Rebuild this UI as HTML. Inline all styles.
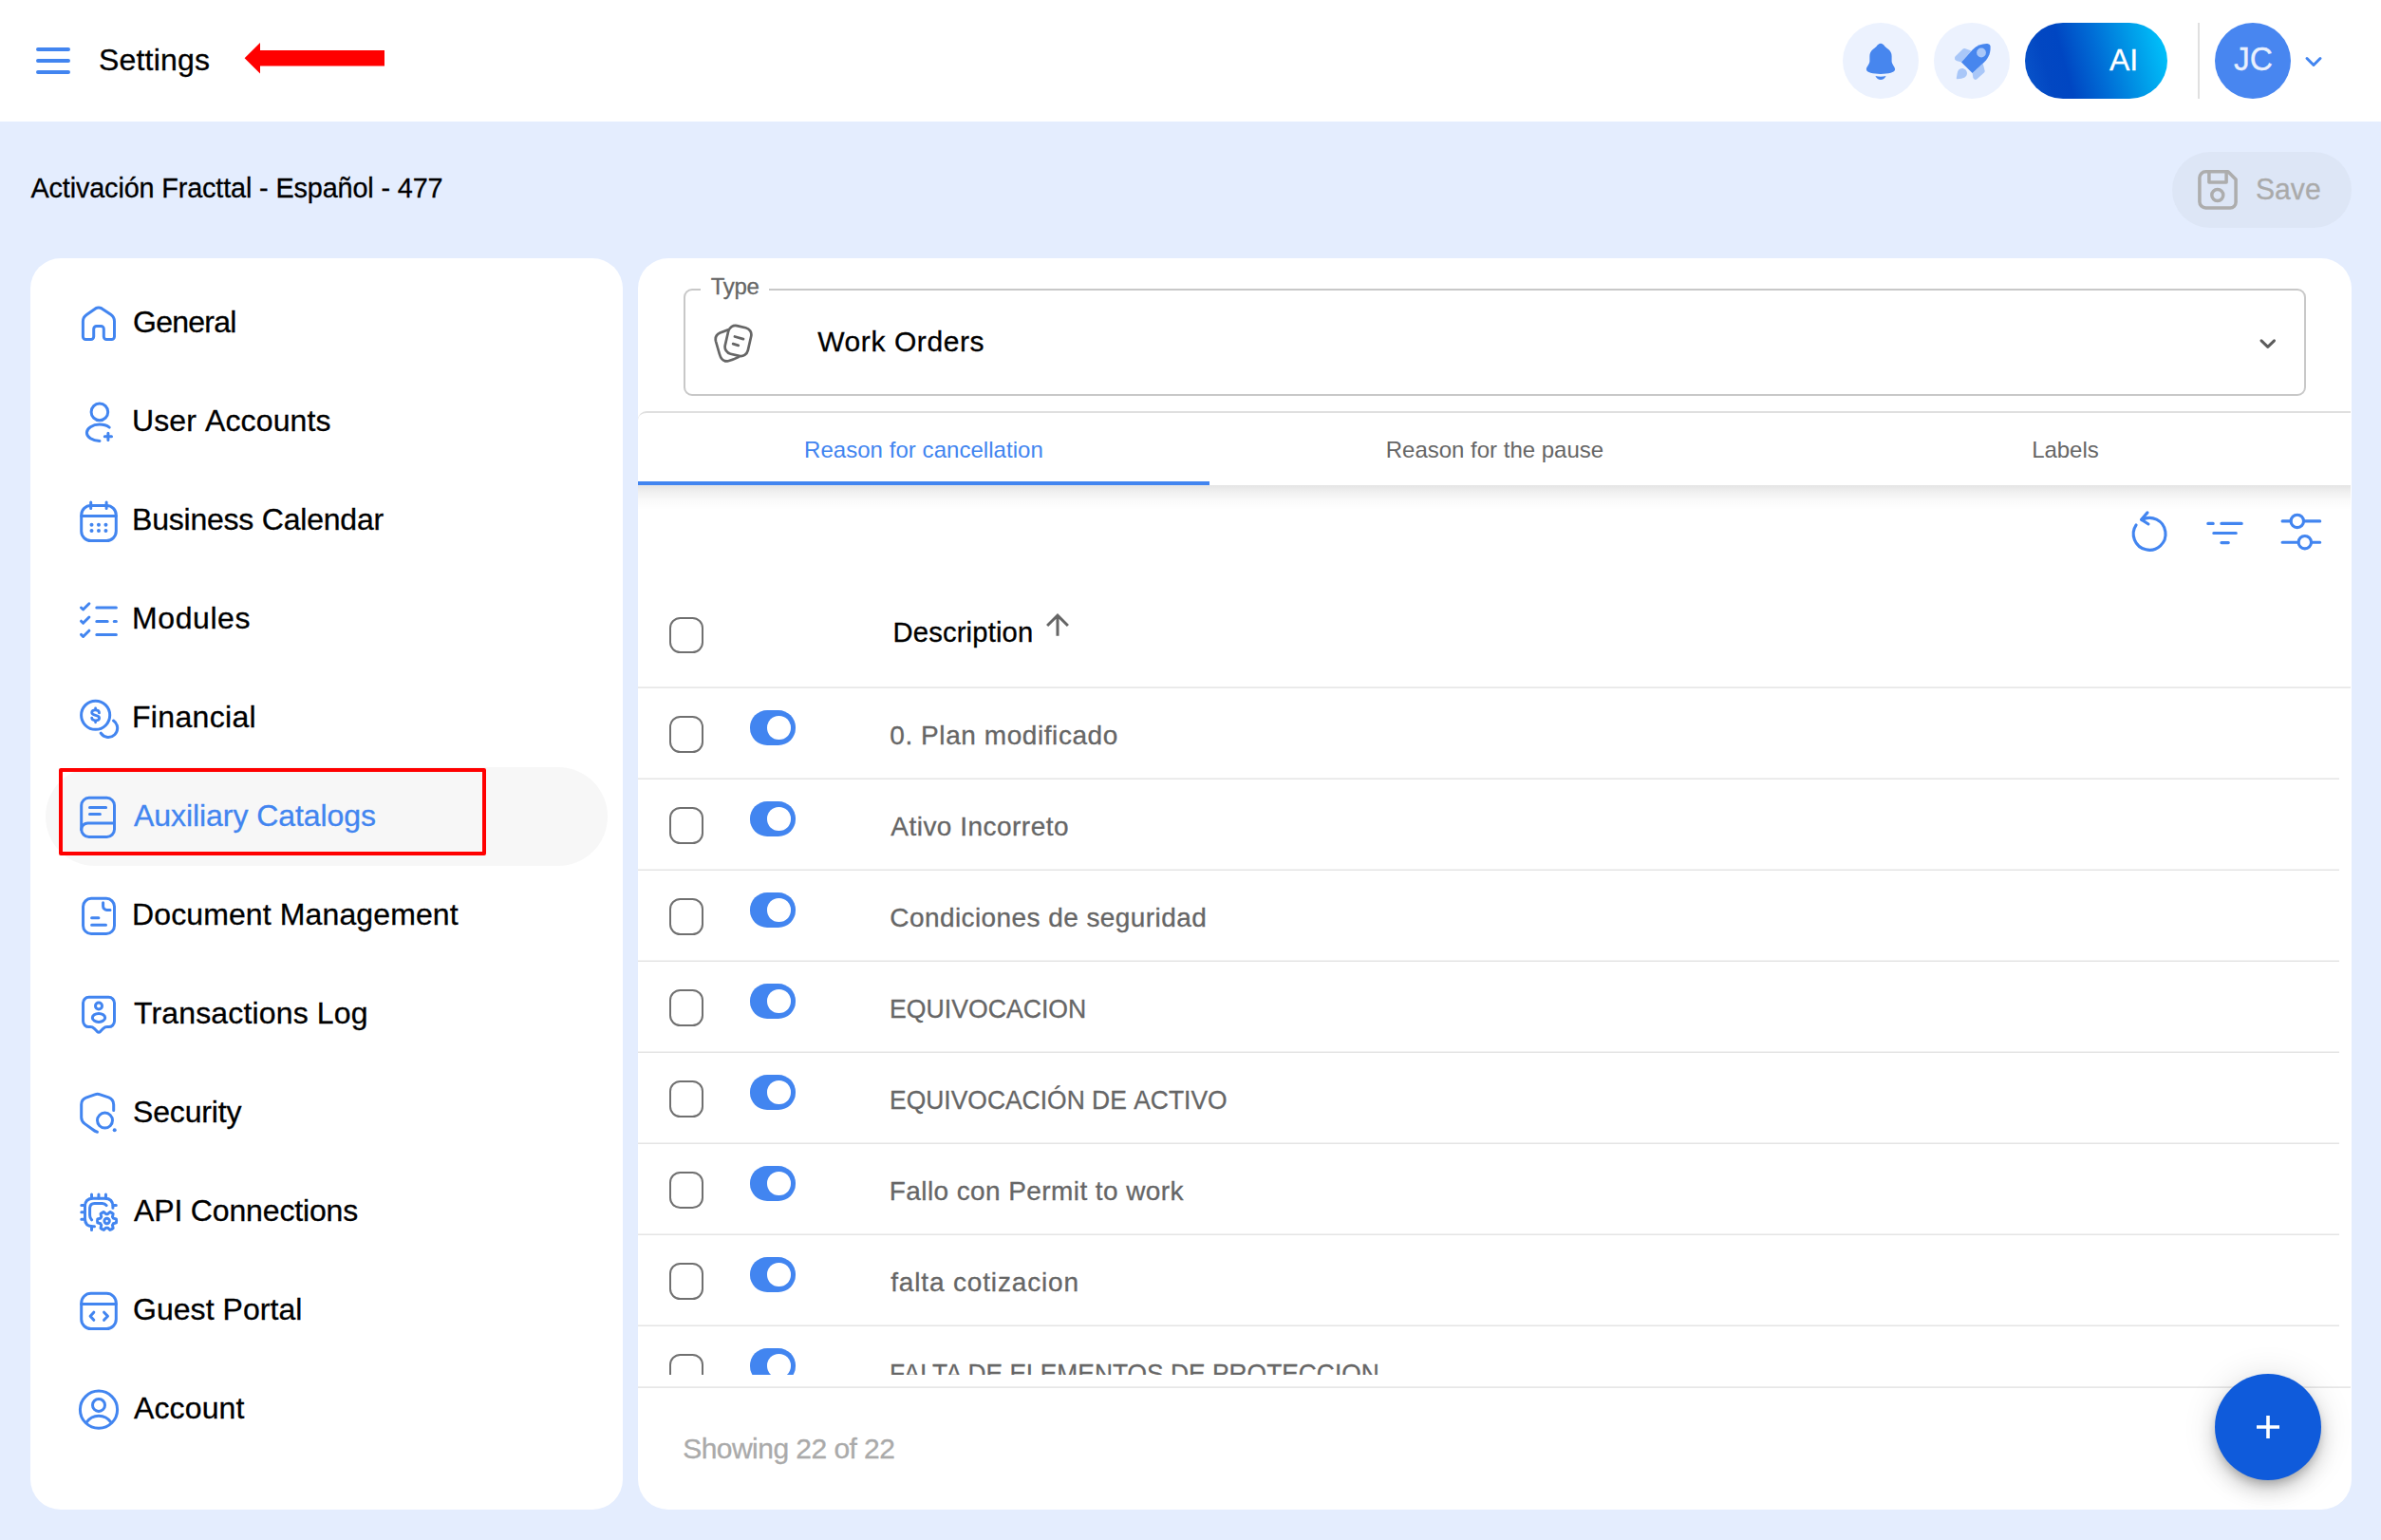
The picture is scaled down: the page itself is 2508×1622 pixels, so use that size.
<!DOCTYPE html><html lang="en"><head><meta charset="utf-8"><title>Settings - Auxiliary Catalogs</title>
<style>
*{box-sizing:border-box;margin:0;padding:0}
html,body{width:2508px;height:1622px;overflow:hidden}
body{position:relative;background:#e4edfe;font-family:"Liberation Sans", Arial, sans-serif;-webkit-font-smoothing:antialiased}
.abs,.t,.ic{position:absolute}
.t{display:block;line-height:1;white-space:nowrap;font-weight:400;-webkit-text-stroke:0.3px currentColor}
h1.t{font-weight:400}
.ic{display:block;overflow:visible}
#top{position:absolute;left:0;top:0;width:2508px;height:128px;background:#fff}
.round{position:absolute;width:80px;height:80px;border-radius:50%}
#nav{position:absolute;left:32px;top:272px;width:624px;height:1318px;background:#fff;border-radius:32px}
#main{position:absolute;left:672px;top:272px;width:1804.5px;height:1318px;background:#fff;border-radius:32px;overflow:hidden}
.cb{position:absolute;width:36.2px;height:38.4px;border:2px solid #707070;border-radius:11.5px;background:#fff}
.tg{position:absolute;width:48.3px;height:36.2px;border-radius:18.1px;background:#4285f0}
.tg i{position:absolute;left:17.8px;top:5.9px;width:24.6px;height:24.5px;border-radius:50%;background:#fff}
.ln{position:absolute;left:0;height:2px;background:linear-gradient(180deg,#f2f2f2 50%,#e4e4e4 50%)}
.ln.h{background:linear-gradient(180deg,#eeeeee 50%,#e7e7e7 50%)}
</style></head><body>
<header id="top">
<svg class="ic" style="left:38px;top:50px" width="36" height="28" viewBox="0 0 36 28" fill="none" stroke="#4285f0" stroke-width="4" stroke-linecap="round" stroke-linejoin="round" ><path d="M2 2H34M2 14H34M2 26H34"/></svg>
<span class="t" style="left:104px;top:47px;font-size:32px;letter-spacing:0.196px;color:#000;">Settings</span>
<svg class="ic" style="left:250px;top:40px" width="170" height="44" viewBox="250 40 170 44"><polygon fill="#ff0000" points="257.6,61.3 274,45.1 274,53 405,53 405,69.5 274,69.5 274,77.6"/></svg>
<div class="round" style="left:1941px;top:24px;background:#ecf2fe"><svg class="ic" style="left:0;top:0" width="80" height="80" viewBox="-40 -40 80 80"><path fill="#4786ee" d="M0-18.2C-1.8-18.2-3.2-16.8-4.3-15.3C-5.5-14-7-13-8.2-12.1C-10.5-10.2-11.6-8-11.6-5L-11.6 0.5C-11.6 3.5-15.1 6.5-15.1 9C-15.1 12.4-8 13.9 0 13.9C8 13.9 15.1 12.4 15.1 9C15.1 6.5 11.6 3.5 11.6 0.5L11.6-5C11.6-8 10.5-10.2 8.2-12.1C7-13 5.5-14 4.3-15.3C3.2-16.8 1.8-18.2 0-18.2Z"/><path fill="#4786ee" d="M-5.6 15.9Q0 17.5 5.6 15.9Q3.6 20 0 20Q-3.6 20-5.6 15.9Z"/></svg></div>
<div class="round" style="left:2037px;top:24px;background:#ecf2fe"><svg class="ic" style="left:0;top:0" width="80" height="80" viewBox="-40 -40 80 80"><g fill="#a9c7f8"><path d="M-9.6-12.3Q-8.6-13.2-7.4-12.9L-0.6-10.5L-11 1.5L-16.2 0Q-18.6-0.9-18-3.2Q-17.8-4.2-17-5Z"/><path d="M11.7 3.1L13.6 10.2Q13.9 11.5 13 12.4L5.4 19.3Q4 20.3 2.6 19.6Q1.6 19 1.3 17.6L0.6 13Z"/><path d="M-10.4 7.9C-7.2 7.9-5 10.3-5 13.1C-5 16.2-7.4 18.3-10.8 18.7L-15.2 19.3Q-16.4 19.4-16.2 18.2L-15.4 13.4C-14.9 10.3-13.2 7.9-10.4 7.9Z"/></g><path fill="#4786ee" d="M-11 1.5L0.6 13L12.8 1.8C18.6-3.9 20-10 19.5-15.6Q19.3-17.6 17.2-17.8C11.4-18.3 5.6-16.4 0.6-11.5Z"/><circle cx="10" cy="-8.5" r="4.9" fill="#a9c7f8"/></svg></div>
<div class="abs" style="left:2133px;top:24px;width:150px;height:80px;border-radius:40px;background:linear-gradient(75deg,#0a56cb 0%,#0247c2 18%,#0046c2 30%,#006dd6 52%,#009be8 75%,#00caff 100%)"></div>
<span class="t" style="left:2222px;top:47px;font-size:32px;letter-spacing:-0.044px;color:#fff;">AI</span>
<div class="abs" style="left:2315px;top:24px;width:2px;height:80px;background:#e0e0e0"></div>
<div class="round" style="left:2333px;top:24px;background:#4886f0"></div>
<span class="t" style="left:2353.1px;top:44.4px;font-size:35px;letter-spacing:0px;color:#e9f0fd;transform:scaleX(0.959);transform-origin:0 50%;">JC</span>
<svg class="ic" style="left:2426px;top:56px" width="22" height="18" viewBox="0 0 22 18" fill="none" stroke="#4285f0" stroke-width="3" stroke-linecap="round" stroke-linejoin="round" ><path d="M4 5.5L11 12.5L18 5.5"/></svg>
</header>
<h1 class="t" style="left:32.5px;top:184px;font-size:28.8px;letter-spacing:-0.133px;color:#000;">Activación Fracttal - Español - 477</h1>
<div class="abs" style="left:2288px;top:160px;width:189px;height:80px;border-radius:40px;background:#dde6f6"></div>
<svg class="ic" style="left:2315px;top:179px" width="42" height="42" viewBox="0 0 42 42" fill="none" stroke="#adadad" stroke-width="3.5" stroke-linecap="butt" stroke-linejoin="round" ><path d="M8.4 1.75H31.9L40.1 10V34a6 6 0 0 1 -6 6H8.4a6.5 6.5 0 0 1 -6.5 -6.5V8.25a6.5 6.5 0 0 1 6.5 -6.5Z"/><path d="M11.9 1.75V12.9H30.1V1.75"/><circle cx="20.8" cy="26.6" r="6"/></svg>
<span class="t" style="left:2376.06px;top:183px;font-size:32px;letter-spacing:0px;color:#aaaaaa;transform:scaleX(0.9418);transform-origin:0 50%;">Save</span>
<nav id="nav">
<div class="abs" style="left:16px;top:536px;width:592px;height:104px;border-radius:52px;background:#f7f7f7"></div>
<a class="abs" style="left:0;top:16px;width:624px;height:104px">
<svg class="ic" style="left:48px;top:28px" width="48" height="48" viewBox="0 0 48 48" fill="none" stroke="#4285f0" stroke-width="3" stroke-linecap="round" stroke-linejoin="round" ><path d="M18.7 38.6V30.4a3 3 0 0 1 3-3h4.6a3 3 0 0 1 3 3v8.2a3 3 0 0 0 3 3h5.2a3 3 0 0 0 3-3V22.5Q40.5 17.8 36.7 15.2L27.2 8.9Q23.85 6.9 20.6 8.9L11.2 15.4Q7.4 18 7.4 22.5V38.6a3 3 0 0 0 3 3h5.3a3 3 0 0 0 3-3Z"/></svg>
<span class="t" style="left:108.0px;top:34.7px;font-size:32px;letter-spacing:-0.739px;color:#000;">General</span>
</a>
<a class="abs" style="left:0;top:120px;width:624px;height:104px">
<svg class="ic" style="left:48px;top:28px" width="48" height="48" viewBox="0 0 48 48" fill="none" stroke="#4285f0" stroke-width="3" stroke-linecap="round" stroke-linejoin="round" ><circle cx="24.9" cy="13.9" r="8.8"/><path d="M35.2 30.1C32.6 28.2 28.9 27.1 24.8 27.1C17.4 27.1 11.4 31 11.4 35.8C11.4 40.4 17.2 44.1 25 44.4"/><path d="M30.3 39.8h7.2M33.9 36.2v7.2"/></svg>
<span class="t" style="left:107.0px;top:34.7px;font-size:32px;letter-spacing:0.118px;color:#000;font-kerning:none;">User Accounts</span>
</a>
<a class="abs" style="left:0;top:224px;width:624px;height:104px">
<svg class="ic" style="left:48px;top:28px" width="48" height="48" viewBox="0 0 48 48" fill="none" stroke="#4285f0" stroke-width="3" stroke-linecap="round" stroke-linejoin="round" ><rect x="5.7" y="8.4" width="36.6" height="37.1" rx="10"/><path d="M5.7 19.4H42.3M15.7 5.1v6.3M32.1 5.1v6.3"/><circle cx="16.5" cy="28.7" r="2" fill="#4285f0" stroke="none"/><circle cx="23.95" cy="28.7" r="2" fill="#4285f0" stroke="none"/><circle cx="31.45" cy="28.7" r="2" fill="#4285f0" stroke="none"/><circle cx="16.5" cy="35.1" r="2" fill="#4285f0" stroke="none"/><circle cx="23.95" cy="35.1" r="2" fill="#4285f0" stroke="none"/><circle cx="31.45" cy="35.1" r="2" fill="#4285f0" stroke="none"/></svg>
<span class="t" style="left:107.0px;top:34.7px;font-size:32px;letter-spacing:-0.215px;color:#000;">Business Calendar</span>
</a>
<a class="abs" style="left:0;top:328px;width:624px;height:104px">
<svg class="ic" style="left:48px;top:28px" width="48" height="48" viewBox="0 0 48 48" fill="none" stroke="#4285f0" stroke-width="3" stroke-linecap="round" stroke-linejoin="round" ><path d="M5.5 12l2.1 2L13.9 7.8M5.5 26.2l2.1 2.1L13.9 22M5.5 40.4l2.1 2.1L13.9 36.2"/><path d="M21.8 12H42.4M21.8 26.4H33.2M40.2 26.4H42.4M21.8 40.55H42.4"/></svg>
<span class="t" style="left:107.0px;top:34.7px;font-size:32px;letter-spacing:0.591px;color:#000;">Modules</span>
</a>
<a class="abs" style="left:0;top:432px;width:624px;height:104px">
<svg class="ic" style="left:48px;top:28px" width="48" height="48" viewBox="0 0 48 48" fill="none" stroke="#4285f0" stroke-width="3" stroke-linecap="round" stroke-linejoin="round" ><circle cx="20.65" cy="21.3" r="15.05"/><path d="M39.55 27.05A9.54 9.54 0 1 1 26.2 40.2"/><path d="M24.5 18.9C24.5 17 23 15.9 20.6 15.9C18.2 15.9 16.7 17 16.7 18.6C16.7 20.3 18.2 20.9 20.6 21.4C23 21.9 24.6 22.6 24.6 24.2C24.6 25.7 23 26.8 20.6 26.8C18.2 26.8 16.7 25.7 16.7 24.1M20.6 14v1.9M20.6 26.8v2" stroke-width="2.8"/></svg>
<span class="t" style="left:107.0px;top:34.7px;font-size:32px;letter-spacing:0.318px;color:#000;">Financial</span>
</a>
<a class="abs" style="left:0;top:536px;width:624px;height:104px">
<svg class="ic" style="left:48px;top:28px" width="48" height="48" viewBox="0 0 48 48" fill="none" stroke="#4285f0" stroke-width="3" stroke-linecap="round" stroke-linejoin="round" ><rect x="5.7" y="4.35" width="34.8" height="41.15" rx="8"/><path d="M14.5 14.55H31.6M14.5 21.6H25.4M40.5 30.9H12.5a6.8 6.8 0 0 0 -6.8 6.8"/></svg>
<span class="t" style="left:109.0px;top:34.7px;font-size:32px;letter-spacing:-0.065px;color:#4285f0;">Auxiliary Catalogs</span>
</a>
<a class="abs" style="left:0;top:640px;width:624px;height:104px">
<svg class="ic" style="left:48px;top:28px" width="48" height="48" viewBox="0 0 48 48" fill="none" stroke="#4285f0" stroke-width="3" stroke-linecap="round" stroke-linejoin="round" ><rect x="7.55" y="6.35" width="32.95" height="37.15" rx="8.5"/><path d="M28.6 10.7V14.4a4 4 0 0 0 4 4H36M16.6 26.65H23.9M16.6 34.15H31.5"/></svg>
<span class="t" style="left:107.0px;top:34.7px;font-size:32px;letter-spacing:0.118px;color:#000;">Document Management</span>
</a>
<a class="abs" style="left:0;top:744px;width:624px;height:104px">
<svg class="ic" style="left:48px;top:28px" width="48" height="48" viewBox="0 0 48 48" fill="none" stroke="#4285f0" stroke-width="3" stroke-linecap="round" stroke-linejoin="round" ><path d="M13.55 6.35H34.5a6 6 0 0 1 6 6V31.6a6 6 0 0 1 -6 6H33q-2.5 0 -4.3 1.7L25.8 42.3q-1.8 1.6 -3.6 0L19.3 39.3q-1.8 -1.7 -4.3 -1.7H13.55a6 6 0 0 1 -6 -6V12.35a6 6 0 0 1 6 -6Z"/><circle cx="24" cy="15.5" r="3.5"/><ellipse cx="24" cy="27.9" rx="6.7" ry="4.5"/></svg>
<span class="t" style="left:109.0px;top:34.7px;font-size:32px;letter-spacing:0.151px;color:#000;">Transactions Log</span>
</a>
<a class="abs" style="left:0;top:848px;width:624px;height:104px">
<svg class="ic" style="left:48px;top:28px" width="48" height="48" viewBox="0 0 48 48" fill="none" stroke="#4285f0" stroke-width="3" stroke-linecap="round" stroke-linejoin="round" ><path d="M39.7 21.6V15.5Q39.7 10 34.5 7.9L25.5 4.8Q22.7 3.8 19.9 4.8L10.6 8.2Q5.7 10.2 5.7 15.2V29Q5.7 33 9.3 35.6L17.5 41.5Q20 43.6 22.5 44.2"/><circle cx="30.5" cy="32.1" r="8"/><circle cx="40.7" cy="42.2" r="2" fill="#4285f0" stroke="none"/></svg>
<span class="t" style="left:108.0px;top:34.7px;font-size:32px;letter-spacing:-0.156px;color:#000;">Security</span>
</a>
<a class="abs" style="left:0;top:952px;width:624px;height:104px">
<svg class="ic" style="left:48px;top:28px" width="48" height="48" viewBox="0 0 48 48" fill="none" stroke="#4285f0" stroke-width="3" stroke-linecap="round" stroke-linejoin="round" ><path d="M38.9 20.3V18.5Q38.9 10.15 30.5 10.15H18Q9.5 10.15 9.5 18.5V31.5Q9.5 39.7 17.5 39.7H19.5"/><path d="M32.1 17.6Q30.5 15.5 27.9 15.5H19.5Q14.6 15.5 14.6 21V28Q14.6 31 16.6 32.8"/><path d="M16.5 5.9v4.2M23.95 5.9v4.2M31.45 5.9v4.2M5.8 17.4h3.7M5.8 24.85h3.7M5.8 32.3h3.7M39.2 17.4h3.1M16.5 39.7v3.8"/><path d="M42.42 32.04A10.0 10.0 0 0 1 42.42 35.86L39.32 36.80A7.3 7.3 0 0 1 38.43 38.34L39.16 41.50A10.0 10.0 0 0 1 35.86 43.41L33.49 41.20A7.3 7.3 0 0 1 31.71 41.20L29.34 43.41A10.0 10.0 0 0 1 26.04 41.50L26.77 38.34A7.3 7.3 0 0 1 25.88 36.80L22.78 35.86A10.0 10.0 0 0 1 22.78 32.04L25.88 31.10A7.3 7.3 0 0 1 26.77 29.56L26.04 26.40A10.0 10.0 0 0 1 29.34 24.49L31.71 26.70A7.3 7.3 0 0 1 33.49 26.70L35.86 24.49A10.0 10.0 0 0 1 39.16 26.40L38.43 29.56A7.3 7.3 0 0 1 39.32 31.10Z"/><circle cx="32.6" cy="33.95" r="2.7"/></svg>
<span class="t" style="left:109.0px;top:34.7px;font-size:32px;letter-spacing:-0.151px;color:#000;">API Connections</span>
</a>
<a class="abs" style="left:0;top:1056px;width:624px;height:104px">
<svg class="ic" style="left:48px;top:28px" width="48" height="48" viewBox="0 0 48 48" fill="none" stroke="#4285f0" stroke-width="3" stroke-linecap="round" stroke-linejoin="round" ><rect x="5.7" y="6.35" width="36.6" height="37.15" rx="10"/><path d="M5.7 17.4H42.3M18.8 26.2L15.1 30.25L18.8 34.3M29.6 26.2L33.5 30.25L29.6 34.3"/></svg>
<span class="t" style="left:108.0px;top:34.7px;font-size:32px;letter-spacing:0.045px;color:#000;">Guest Portal</span>
</a>
<a class="abs" style="left:0;top:1160px;width:624px;height:104px">
<svg class="ic" style="left:48px;top:28px" width="48" height="48" viewBox="0 0 48 48" fill="none" stroke="#4285f0" stroke-width="3" stroke-linecap="round" stroke-linejoin="round" ><circle cx="24" cy="24.7" r="19.6"/><circle cx="24" cy="19.95" r="6.5"/><path d="M10.8 38.4C14 33.9 18.8 31.3 24 31.3C29.2 31.3 34 33.9 37.2 38.4"/></svg>
<span class="t" style="left:109.0px;top:34.7px;font-size:32px;letter-spacing:0.128px;color:#000;">Account</span>
</a>
<div class="abs" style="left:30px;top:537px;width:450px;height:92px;border:4px solid #ff0000;border-radius:2px"></div>
</nav>
<main id="main">
<div class="abs" style="left:48px;top:32px;width:1709px;height:113px;border:2px solid #c8c8c8;border-radius:9px"></div>
<div class="abs" style="left:66px;top:30px;width:72px;height:6px;background:#fff"></div>
<span class="t" style="left:76.75px;top:17.75px;font-size:24px;letter-spacing:-0.311px;color:#666;">Type</span>
<svg class="ic" style="left:78px;top:66px" width="46" height="46" viewBox="750 338 46 46" fill="none" stroke="#666" stroke-width="2.7" stroke-linecap="round" stroke-linejoin="round"><path d="M766.4 347.5L758.5 350.6Q752.6 353.3 754 359.5L757.9 373Q760.3 381.6 767 380.2Q772 379 777.8 376.1"/><rect x="-12.3" y="-15.2" width="24.6" height="30.4" rx="7.6" transform="translate(777.5 358.95) rotate(13)"/><path d="M773.9 354.5L783 357.1M772.1 362.1L777.8 363.9"/></svg>
<span class="t" style="left:189.25px;top:72.5px;font-size:30px;letter-spacing:0.578px;color:#000;">Work Orders</span>
<svg class="ic" style="left:1704px;top:80px" width="26" height="22" viewBox="2376 352 26 22" fill="none" stroke="#5c5c5c" stroke-width="3" stroke-linecap="round" stroke-linejoin="round"><path d="M2382 358.9L2388.75 365.3L2395.5 358.9"/></svg>
<div class="abs" style="left:0;top:238.5px;width:1804px;height:26px;background:linear-gradient(180deg,rgba(0,0,0,.105) 0%,rgba(0,0,0,.055) 30%,rgba(0,0,0,.018) 65%,rgba(0,0,0,0) 100%)"></div>
<div class="abs" style="left:0;top:161px;width:1804px;height:77.5px;background:#fff;border-top:2px solid #dfdfdf;border-top-left-radius:9px"></div>
<div class="abs" style="left:0;top:235px;width:601.5px;height:3.6px;background:#4285f0"></div>
<span class="t" style="left:175px;top:190px;font-size:24px;letter-spacing:0.047px;color:#4285f0;-webkit-text-stroke:0;">Reason for cancellation</span>
<span class="t" style="left:787.75px;top:189.75px;font-size:24px;letter-spacing:-0.007px;color:#666;-webkit-text-stroke:0;">Reason for the pause</span>
<span class="t" style="left:1468.2px;top:189.75px;font-size:24px;letter-spacing:-0.045px;color:#666;-webkit-text-stroke:0;">Labels</span>
<svg class="ic" style="left:1564px;top:260px" width="220" height="56" viewBox="2236 532 220 56" fill="none" stroke="#4285f0" stroke-width="3.1" stroke-linecap="round" stroke-linejoin="round"><path d="M2255.9 547.6A16.9 16.9 0 1 1 2250.1 552.95"/><path d="M2262 539.9L2255.5 547.2L2263 552"/><path d="M2325.8 551.4H2331.2M2339.9 551.4H2361.2M2331.8 561.5H2355.3M2339.9 571.6H2347.3"/><path d="M2404.1 548.9H2412.9M2426.7 548.9H2443.7M2404.1 571.2H2420.9M2434.7 571.2H2443.7"/><circle cx="2419.8" cy="548.9" r="6.7"/><circle cx="2427.8" cy="571.2" r="6.7"/></svg>
<div class="cb" style="left:33.1px;top:378px"></div>
<span class="t" style="left:268.5px;top:380.25px;font-size:29.2px;letter-spacing:0.174px;color:#000;">Description</span>
<svg class="ic" style="left:426px;top:370px" width="32" height="32" viewBox="1098 642 32 32" fill="none" stroke="#666" stroke-width="3" stroke-linecap="butt" stroke-linejoin="miter"><path d="M1114 669.8V648.8M1103.1 659L1114 648.1L1124.9 659"/></svg>
<div class="ln h" style="top:451px;width:1804px"></div>
<div class="abs" style="left:0;top:453px;width:1804px;height:722.5px;overflow:hidden">
<div class="cb" style="left:33.1px;top:29.3px"></div>
<div class="tg" style="left:118.2px;top:23.4px"><i></i></div>
<span class="t" style="left:265.25px;top:36.25px;font-size:28px;letter-spacing:0.571px;color:#666;">0. Plan modificado</span>
<div class="ln" style="top:94px;width:1791.5px"></div>
<div class="cb" style="left:33.1px;top:125.3px"></div>
<div class="tg" style="left:118.2px;top:119.4px"><i></i></div>
<span class="t" style="left:266.25px;top:132.25px;font-size:28px;letter-spacing:0.486px;color:#666;">Ativo Incorreto</span>
<div class="ln" style="top:190px;width:1791.5px"></div>
<div class="cb" style="left:33.1px;top:221.3px"></div>
<div class="tg" style="left:118.2px;top:215.4px"><i></i></div>
<span class="t" style="left:265.25px;top:228.25px;font-size:28px;letter-spacing:0.426px;color:#666;">Condiciones de seguridad</span>
<div class="ln" style="top:286px;width:1791.5px"></div>
<div class="cb" style="left:33.1px;top:317.3px"></div>
<div class="tg" style="left:118.2px;top:311.4px"><i></i></div>
<span class="t" style="left:264.85px;top:324.25px;font-size:28px;letter-spacing:0px;color:#666;transform:scaleX(0.9516);transform-origin:0 50%;">EQUIVOCACION</span>
<div class="ln" style="top:382px;width:1791.5px"></div>
<div class="cb" style="left:33.1px;top:413.3px"></div>
<div class="tg" style="left:118.2px;top:407.4px"><i></i></div>
<span class="t" style="left:264.86px;top:420.25px;font-size:28px;letter-spacing:0px;color:#666;transform:scaleX(0.9446);transform-origin:0 50%;font-kerning:none;">EQUIVOCACIÓN DE ACTIVO</span>
<div class="ln" style="top:478px;width:1791.5px"></div>
<div class="cb" style="left:33.1px;top:509.3px"></div>
<div class="tg" style="left:118.2px;top:503.4px"><i></i></div>
<span class="t" style="left:264.75px;top:516.25px;font-size:28px;letter-spacing:0.41px;color:#666;">Fallo con Permit to work</span>
<div class="ln" style="top:574px;width:1791.5px"></div>
<div class="cb" style="left:33.1px;top:605.3px"></div>
<div class="tg" style="left:118.2px;top:599.4px"><i></i></div>
<span class="t" style="left:266.25px;top:612.25px;font-size:28px;letter-spacing:0.841px;color:#666;">falta cotizacion</span>
<div class="ln" style="top:670px;width:1791.5px"></div>
<div class="cb" style="left:33.1px;top:701.3px"></div>
<div class="tg" style="left:118.2px;top:695.4px"><i></i></div>
<span class="t" style="left:264.87px;top:708.25px;font-size:28px;letter-spacing:0px;color:#666;transform:scaleX(0.9418);transform-origin:0 50%;">FALTA DE ELEMENTOS DE PROTECCION</span>
<div class="ln" style="top:766px;width:1791.5px"></div>
</div>
<div class="ln h" style="top:1188px;width:1804px"></div>
<span class="t" style="left:47.25px;top:1239.25px;font-size:30px;letter-spacing:-0.544px;color:#aaaaaa;">Showing 22 of 22</span>
<div class="abs" style="left:1660.7px;top:1174.9px;width:112px;height:112px;border-radius:50%;background:#0f5bdb;box-shadow:0 6px 10px -2px rgba(0,0,0,.2),0 12px 20px 0 rgba(0,0,0,.14),0 2px 36px 0 rgba(0,0,0,.12)"><svg class="ic" style="left:36px;top:36px" width="40" height="40" viewBox="0 0 40 40" fill="none" stroke="#fff" stroke-width="3.6" stroke-linecap="butt"><path d="M20 8V32M8 20H32"/></svg></div>
</main>
</body></html>
